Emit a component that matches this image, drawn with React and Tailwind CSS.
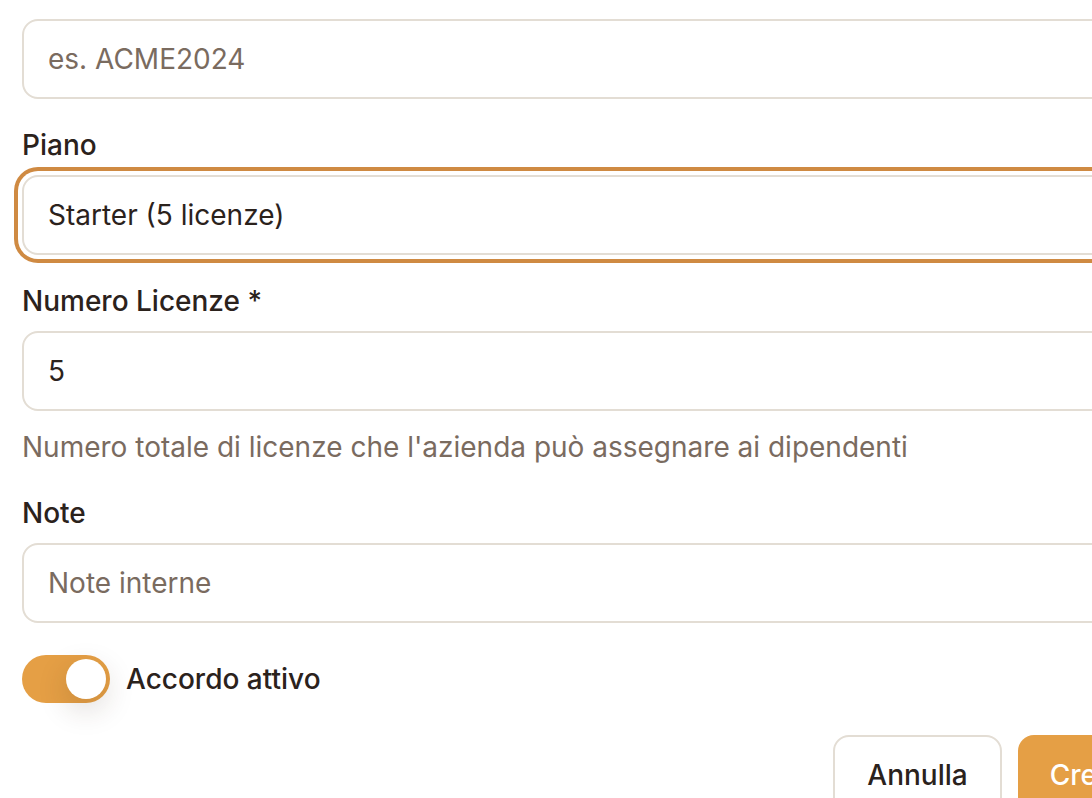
import React, { useState } from 'react';

const Field = ({ label, children, hint }) => (
  <div className="flex flex-col gap-[16px]">
    {label && (
      <label className="text-[28px] leading-none font-medium text-[#2b221c]">{label}</label>
    )}
    {children}
    {hint && <p className="text-[28px] leading-[40px] text-[#7a6b5f]">{hint}</p>}
  </div>
);

const inputCls =
  'h-[80px] w-full rounded-[16px] border-2 border-[#e3ddd4] bg-white px-[24px] text-[28px] text-[#2b221c] placeholder:text-[#7a6b5f] outline-none';

export default function App() {
  const [active, setActive] = useState(true);

  return (
    <div className="w-[1092px] h-[798px] overflow-hidden bg-white font-['Inter',sans-serif]">
      <div className="w-[1266px] pl-[22px] pt-[19px] flex flex-col gap-[32px]">
        <Field>
          <input className={inputCls} placeholder="es. ACME2024" />
        </Field>

        <Field label="Piano">
          <div className="h-[80px] w-full rounded-[16px] border-2 border-[#e3ddd4] bg-white px-[24px] flex items-center text-[28px] text-[#2b221c] ring-4 ring-[#cf8a42] ring-offset-4 ring-offset-white">
            Starter (5 licenze)
          </div>
        </Field>

        <Field
          label="Numero Licenze *"
          hint="Numero totale di licenze che l'azienda può assegnare ai dipendenti"
        >
          <input className={inputCls} defaultValue="5" />
        </Field>

        <Field label="Note">
          <input className={inputCls} placeholder="Note interne" />
        </Field>

        <div className="flex items-center gap-[16px]">
          <button
            onClick={() => setActive(!active)}
            className={`h-[48px] w-[88px] rounded-full p-[4px] flex items-center transition-colors ${
              active ? 'bg-[#e59f45]' : 'bg-[#e3ddd4]'
            }`}
          >
            <span
              className={`block h-[40px] w-[40px] rounded-full bg-white shadow-[0_10px_30px_rgba(60,40,20,0.18)] transition-transform ${
                active ? 'translate-x-[40px]' : 'translate-x-0'
              }`}
            />
          </button>
          <span className="text-[28px] font-medium text-[#2b221c]">Accordo attivo</span>
        </div>

        <div className="flex justify-end gap-[16px]">
          <button className="h-[80px] px-[32px] rounded-[16px] border-2 border-[#e3ddd4] bg-white text-[28px] font-medium text-[#2b221c]">
            Annulla
          </button>
          <button className="h-[80px] px-[32px] rounded-[16px] bg-[#e59f45] text-[28px] font-medium text-white">
            Crea Accordo
          </button>
        </div>
      </div>
    </div>
  );
}
